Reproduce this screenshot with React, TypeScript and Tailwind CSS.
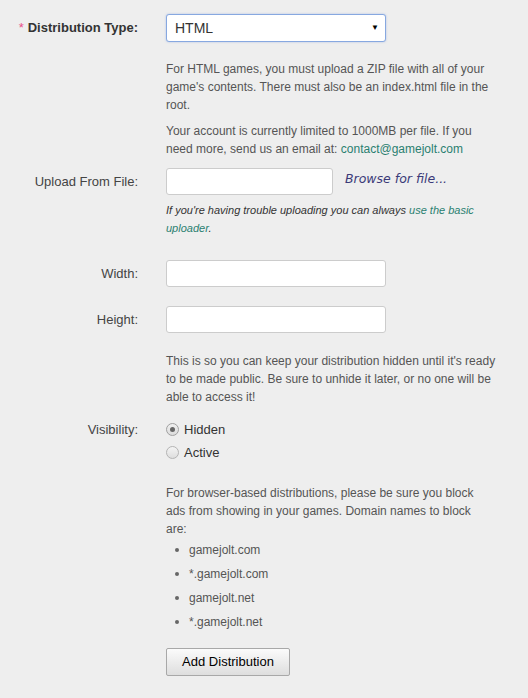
export default function App() {
  const domains = ["gamejolt.com", "*.gamejolt.com", "gamejolt.net", "*.gamejolt.net"];

  return (
    <div className="min-h-[698px] bg-[#eeeeee] font-['Liberation_Sans',Arial,sans-serif] text-[#444] pt-[14px]">
      {/* Distribution type */}
      <div className="flex items-center">
        <label className="w-[138px] shrink-0 text-right text-[13px] font-bold text-[#333]">
          <span className="text-[#e8508a] font-normal mr-1">*</span>
          Distribution Type:
        </label>
        <div className="ml-[28px] shrink-0 w-[220px] h-[28px] bg-white border border-[#87a8e0] rounded-[3px] flex items-center justify-between pl-[8px] pr-[6px] text-[14px] text-[#333] shadow-[0_0_2px_rgba(100,140,220,0.5)]">
          <span>HTML</span>
          <span className="text-[8px] text-black">▼</span>
        </div>
      </div>

      <div className="ml-[166px] mt-[18px] w-[330px] text-[12px] leading-[18px] text-[#555]">
        <p>
          For HTML games, you must upload a ZIP file with all of your game's contents. There must also be an
          index.html file in the root.
        </p>
        <p className="mt-[8px]">
          Your account is currently limited to 1000MB per file. If you need more, send us an email at:{" "}
          <a className="text-[#2a8070]">contact@gamejolt.com</a>
        </p>
      </div>

      {/* Upload */}
      <div className="flex items-center mt-[10px]">
        <label className="w-[138px] shrink-0 text-right text-[13px]">Upload From File:</label>
        <div className="ml-[28px] shrink-0 w-[167px] h-[27px] bg-white border border-[#cccccc] rounded-[3px]" />
        <span className="ml-[12px] shrink-0 -mt-[4px] text-[12.5px] italic text-[#3a3a78] font-['DejaVu_Sans',Verdana,sans-serif]">
          Browse for file...
        </span>
      </div>
      <p className="ml-[166px] mt-[6px] w-[320px] text-[11px] leading-[18px] italic text-[#333]">
        If you're having trouble uploading you can always{" "}
        <a className="text-[#2a8070]">use the basic uploader</a>.
      </p>

      {/* Width / Height */}
      <div className="flex items-center mt-[23px]">
        <label className="w-[138px] shrink-0 text-right text-[13px]">Width:</label>
        <div className="ml-[28px] shrink-0 w-[220px] h-[27px] bg-white border border-[#cccccc] rounded-[3px]" />
      </div>
      <div className="flex items-center mt-[19px]">
        <label className="w-[138px] shrink-0 text-right text-[13px]">Height:</label>
        <div className="ml-[28px] shrink-0 w-[220px] h-[27px] bg-white border border-[#cccccc] rounded-[3px]" />
      </div>

      <p className="ml-[166px] mt-[19px] w-[335px] text-[12px] leading-[18px] text-[#555]">
        This is so you can keep your distribution hidden until it's ready to be made public. Be sure to unhide
        it later, or no one will be able to access it!
      </p>

      {/* Visibility */}
      <div className="flex mt-[12px]">
        <label className="w-[138px] shrink-0 text-right text-[13px] leading-[23px]">Visibility:</label>
        <div className="ml-[28px] flex flex-col text-[13px] text-[#333]">
          <div className="flex items-center h-[23px]">
            <span className="w-[13px] h-[13px] rounded-full border border-[#a0a0a0] bg-gradient-to-b from-[#f0f0f0] to-[#dcdcdc] flex items-center justify-center">
              <span className="w-[5px] h-[5px] rounded-full bg-[#666]" />
            </span>
            <span className="ml-[5px]">Hidden</span>
          </div>
          <div className="flex items-center h-[23px]">
            <span className="w-[13px] h-[13px] rounded-full border border-[#b4b4b4] bg-gradient-to-b from-[#f4f4f4] to-[#dedede]" />
            <span className="ml-[5px]">Active</span>
          </div>
        </div>
      </div>

      <div className="ml-[166px] mt-[20px] text-[12px] leading-[18px] text-[#555]">
        <p className="w-[312px]">
          For browser-based distributions, please be sure you block ads from showing in your games. Domain names
          to block are:
        </p>
        <ul>
          {domains.map((d) => (
            <li key={d} className="flex items-center h-[24px]">
              <span className="ml-[9px] w-[4px] h-[4px] rounded-full bg-[#666]" />
              <span className="ml-[10px]">{d}</span>
            </li>
          ))}
        </ul>
      </div>

      <button className="ml-[166px] mt-[14px] w-[124px] h-[28px] border border-[#a8a8a8] rounded-[2px] bg-gradient-to-b from-[#fbfbfb] to-[#dedede] text-[13px] text-black">
        Add Distribution
      </button>
    </div>
  );
}
